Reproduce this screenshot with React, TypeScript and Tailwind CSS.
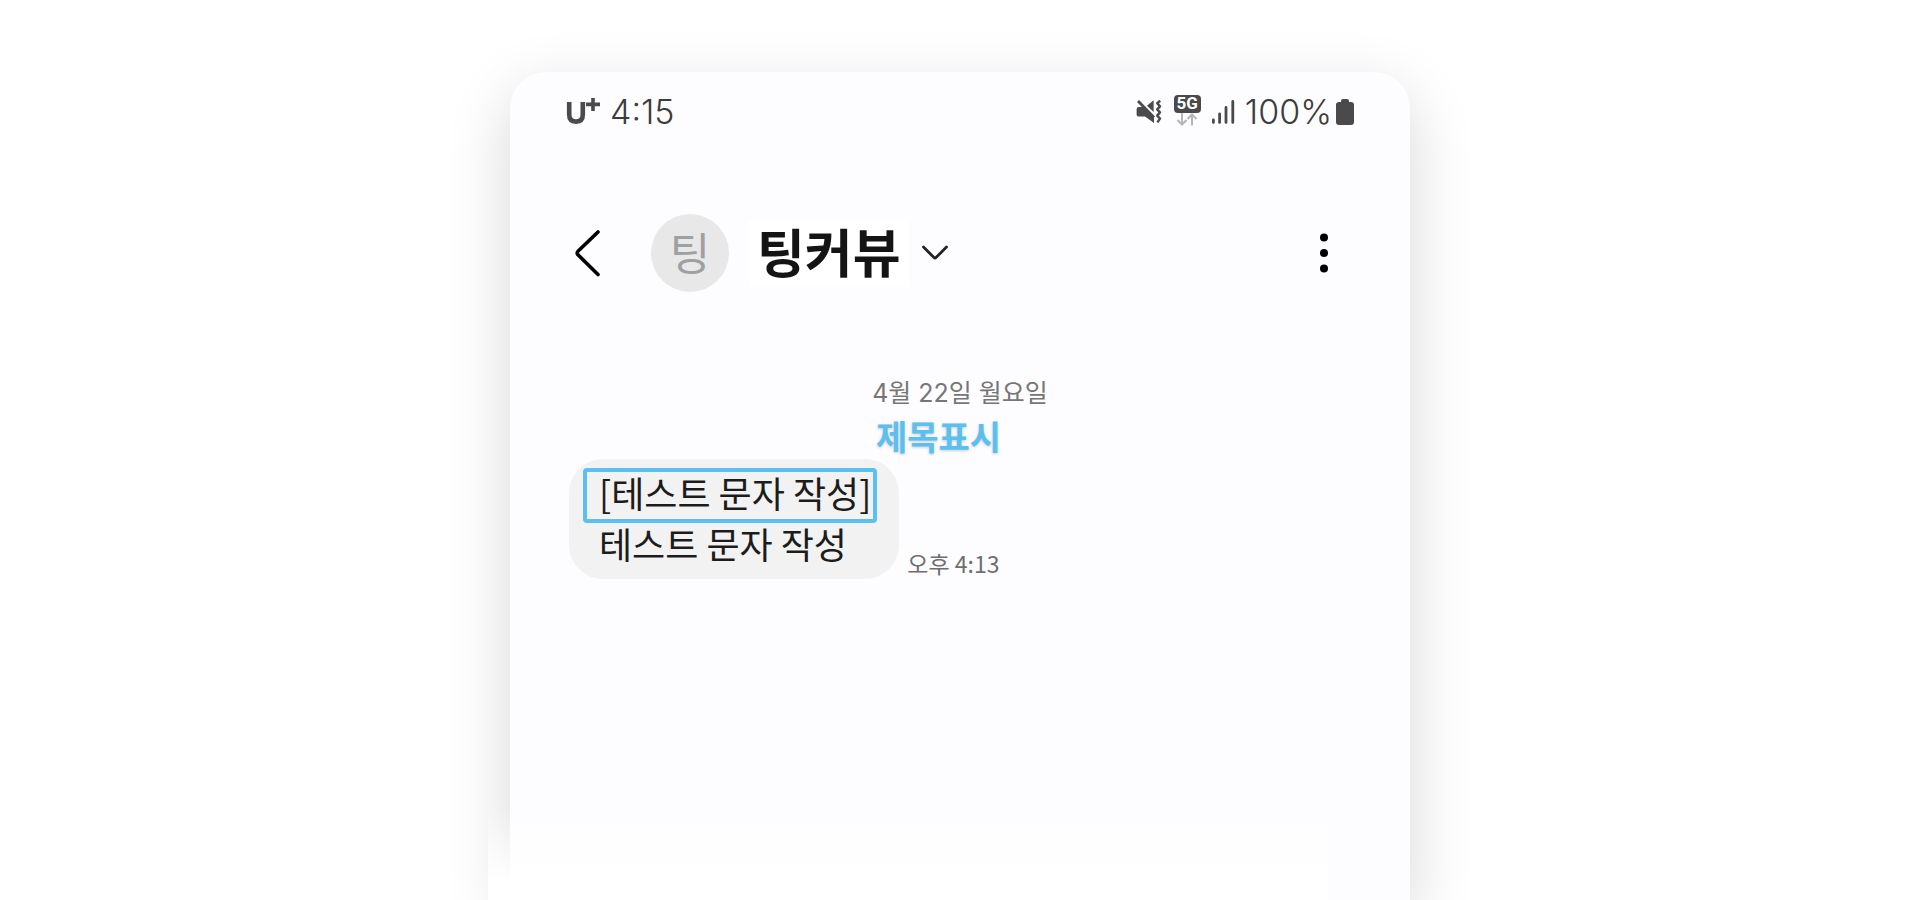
import React from "react";

function MuteIcon() {
  return (
    <svg width="26" height="26" viewBox="0 0 26 26" fill="#4a4a4a" aria-label="Muted" role="img">
      <path d="M3 8 H8 L18 18 V24 L9 17.6 H3 Q0.6 17.6 0.6 15.4 V10.2 Q0.6 8 3 8 Z" />
      <path d="M11 6.8 L17.6 1.2 V13 Z" />
      <path d="M2 2 L18 18.4" stroke="#4a4a4a" strokeWidth="2.8" />
      <path
        d="M24.2 1.8 L21.2 4.2 L24 7.4 L21.2 10.4 L24 13.4 L21.2 16.6 L24 19.6 L21.4 23.4"
        fill="none"
        stroke="#4a4a4a"
        strokeWidth="2.4"
        strokeLinejoin="round"
      />
    </svg>
  );
}

function NetworkIcon() {
  return (
    <div className="mb-1 flex w-[27px] flex-col items-center">
      <span className="flex h-[18px] w-full items-center justify-center rounded-[4px] bg-[#4a4a4a] font-[Roboto] text-[17px] leading-none font-bold text-white">
        5G
      </span>
      <svg width="22" height="13" viewBox="0 0 22 13" fill="none" stroke="#b5b5b5" strokeWidth="2">
        <path d="M6 0 V11.5 M1.5 7 L6 11.5 L10.5 7" />
        <path d="M16 12.5 V1.5 M11.5 6 L16 1.5 L20.5 6" />
      </svg>
    </div>
  );
}

function SignalIcon() {
  return (
    <svg width="24" height="26" viewBox="0 0 24 26" stroke="#4a4a4a" strokeWidth="2.8" strokeLinecap="round">
      <path d="M2.4 21 V23.4 M8.6 15 V23.4 M15 8.5 V23.4 M21.8 2.4 V23.4" />
    </svg>
  );
}

function StatusBar() {
  return (
    <div className="flex h-10 items-center justify-between text-[34px] leading-10 font-light text-[#3c3c3c]">
      <div className="flex items-center gap-2.5">
        <svg width="34" height="28" viewBox="0 -1 34 28" fill="none" stroke="#4a4a4a" role="img" aria-label="U+">
          <path d="M3.2 3 V15.5 Q3.2 22.6 10 22.6 Q16.8 22.6 16.8 15.5 V3" strokeWidth="4.6" />
          <path d="M20 5.4 H34 M27 -1 V12" strokeWidth="3.6" />
        </svg>
        <span>4:15</span>
      </div>
      <div className="flex items-center">
        <MuteIcon />
        <div className="ml-3">
          <NetworkIcon />
        </div>
        <div className="ml-2.5">
          <SignalIcon />
        </div>
        <span className="ml-2.5">100%</span>
        <svg className="ml-1" width="18" height="26" viewBox="0 0 18 26" fill="#4a4a4a" role="img" aria-label="Battery">
          <rect x="5" y="0" width="8" height="6" rx="2" />
          <rect x="0" y="3" width="18" height="23" rx="3" />
        </svg>
      </div>
    </div>
  );
}

function ChatHeader() {
  return (
    <header className="mt-[81px] flex h-20 items-center">
      <button type="button" aria-label="Back" className="ml-2">
        <svg width="28" height="50" viewBox="0 0 28 50" fill="none" stroke="#000" strokeWidth="3.6" strokeLinecap="round" strokeLinejoin="round">
          <path d="M24 4 L4.2 23 Q2.2 25 4.2 27 L24 46.5" />
        </svg>
      </button>
      <div className="ml-[49px] flex size-[78px] items-center justify-center rounded-full bg-[#e8e8e8] pb-1 text-[44px] leading-none text-[#a0a0a0]">
        팅
      </div>
      <h1 className="ml-5 bg-white px-2 pb-1 text-[52px] leading-[64px] font-bold text-[#141414]">팅커뷰</h1>
      <button type="button" aria-label="Contact details" className="ml-3">
        <svg width="28" height="18" viewBox="0 0 28 18" fill="none" stroke="#222" strokeWidth="2.8" strokeLinecap="round" strokeLinejoin="round">
          <path d="M2.5 3 L13 13.6 Q14 14.6 15 13.6 L25.5 3" />
        </svg>
      </button>
      <button type="button" aria-label="More options" className="mr-6 ml-auto">
        <svg width="12" height="44" viewBox="0 0 12 44">
          <circle cx="6" cy="6.5" r="4" />
          <circle cx="6" cy="22" r="4" />
          <circle cx="6" cy="37.5" r="4" />
        </svg>
      </button>
    </header>
  );
}

function Conversation() {
  return (
    <section className="mt-20">
      <p className="text-center font-['Inter','Noto_Sans_CJK_KR',sans-serif] text-[25px] leading-10 text-[#767676]">
        4월 22일 월요일
      </p>
      <div className="relative mt-[46px] ml-[3px] flex items-end gap-2">
        {/* label sitting above the highlighted title */}
        <span className="absolute bottom-full left-[307px] text-[34px] leading-[46px] font-bold whitespace-nowrap text-[#5bc0ef] [text-shadow:0_1px_3px_rgba(0,0,0,0.2)]">
          제목표시
        </span>
        <div className="rounded-[34px] bg-[#f2f2f2] px-[14px] pt-[9px] pb-2 text-[36px] leading-10 text-[#1c1c1c]">
          <p className="mr-2 rounded-[4px] border-4 border-[#5bc0ef] pr-0.5 pb-[7px] pl-3">[테스트 문자 작성]</p>
          <p className="pb-2 pl-4">테스트 문자 작성</p>
        </div>
        <time className="text-[23px] leading-8 text-[#6e6e6e]">오후 4:13</time>
      </div>
    </section>
  );
}

export default function App() {
  return (
    <main className="flex min-h-screen flex-col overflow-hidden bg-white pt-[72px] font-['Inter','Noto_Sans_CJK_KR',sans-serif]">
      <div className="relative mx-auto w-full max-w-[900px] flex-1 rounded-t-[36px] bg-[#fdfdff] px-14 pt-5 shadow-[0_20px_64px_rgba(0,0,0,0.16)]">
        <StatusBar />
        <div className="font-['Noto_Sans_CJK_KR',sans-serif]">
          <ChatHeader />
          <Conversation />
        </div>
        {/* fade at the foot of the phone */}
        <div className="absolute bottom-0 -left-[22px] h-24 w-[840px] bg-linear-to-b from-transparent to-white to-80%" />
      </div>
    </main>
  );
}
